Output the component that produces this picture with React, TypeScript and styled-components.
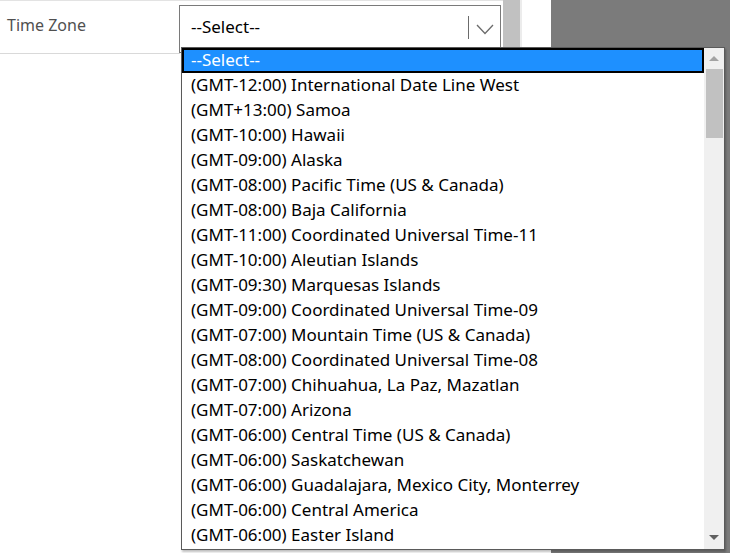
import React from "react";
import styled, { createGlobalStyle } from "styled-components";

const GlobalStyle = createGlobalStyle`
  html, body { margin: 0; padding: 0; width: 730px; height: 553px; overflow: hidden; }
  body { font-family: "Noto Sans", "Open Sans", sans-serif; background: #ffffff; }
`;

const zones = [
  "(GMT-12:00) International Date Line West",
  "(GMT+13:00) Samoa",
  "(GMT-10:00) Hawaii",
  "(GMT-09:00) Alaska",
  "(GMT-08:00) Pacific Time (US & Canada)",
  "(GMT-08:00) Baja California",
  "(GMT-11:00) Coordinated Universal Time-11",
  "(GMT-10:00) Aleutian Islands",
  "(GMT-09:30) Marquesas Islands",
  "(GMT-09:00) Coordinated Universal Time-09",
  "(GMT-07:00) Mountain Time (US & Canada)",
  "(GMT-08:00) Coordinated Universal Time-08",
  "(GMT-07:00) Chihuahua, La Paz, Mazatlan",
  "(GMT-07:00) Arizona",
  "(GMT-06:00) Central Time (US & Canada)",
  "(GMT-06:00) Saskatchewan",
  "(GMT-06:00) Guadalajara, Mexico City, Monterrey",
  "(GMT-06:00) Central America",
  "(GMT-06:00) Easter Island",
];

const Page = styled.div`
  position: relative;
  display: flex;
  width: 730px;
  height: 553px;
`;

const FormPanel = styled.div`
  width: 503px;
  border-top: 1px solid #e3e3e3;
  box-sizing: border-box;
`;

const FieldRow = styled.div`
  display: flex;
  align-items: flex-start;
  height: 52px;
  border-bottom: 1px solid #d9d9d9;
  width: 180px;
  box-sizing: content-box;
  overflow: visible;
`;

const Label = styled.div`
  padding: 13px 0 0 7px;
  width: 172px;
  font-size: 16px;
  color: #505050;
  flex-shrink: 0;
`;

const SelectBox = styled.div`
  margin-top: 4px;
  flex-shrink: 0;
  width: 322px;
  height: 48px;
  box-sizing: border-box;
  border: 1px solid #7a7a7a;
  display: flex;
  align-items: flex-start;
  padding-top: 9px;
  background: #fff;
`;

const SelectText = styled.div`
  flex: 1;
  padding-left: 11px;
  font-size: 17px;
  line-height: 24px;
  color: #000;
`;

const Divider = styled.div`
  width: 1px;
  height: 23px;
  margin-top: 1px;
  background: #6b6b6b;
`;

const Chevron = styled.svg`
  width: 18px;
  height: 11px;
  margin: 9px 6px 0 7px;
`;

const PageScrollbar = styled.div`
  width: 17px;
  background: #c1c1c1;
  height: 47px;
`;

const WhiteStrip = styled.div`
  width: 29px;
  height: 47px;
  background: #fff;
  border-left: 2px solid #ececec;
`;

const Backdrop = styled.div`
  flex: 1;
  background: #7b7b7b;
`;

const Dropdown = styled.div`
  position: absolute;
  left: 181px;
  top: 47px;
  width: 544px;
  height: 503px;
  box-sizing: border-box;
  border: 1px solid #5a5a5a;
  background: #fff;
  display: flex;
  box-shadow: 1px 2px 2px rgba(0, 0, 0, 0.25);
`;

const List = styled.div`
  flex: 1;
  overflow: hidden;
`;

const Option = styled.div<{ $selected?: boolean }>`
  height: 25px;
  box-sizing: border-box;
  padding-left: ${(p) => (p.$selected ? "7px" : "9px")};
  line-height: ${(p) => (p.$selected ? "20px" : "24px")};
  font-size: 17px;
  white-space: nowrap;
  color: ${(p) => (p.$selected ? "#ffffff" : "#000000")};
  background: ${(p) => (p.$selected ? "#1e90ff" : "transparent")};
  border: ${(p) => (p.$selected ? "2px solid #000" : "none")};
`;

const ScrollTrack = styled.div`
  width: 20px;
  background: #f0f0f0;
  display: flex;
  flex-direction: column;
  align-items: center;
`;

const Arrow = styled.div<{ $down?: boolean }>`
  width: 0;
  height: 0;
  border-left: 5px solid transparent;
  border-right: 5px solid transparent;
  ${(p) =>
    p.$down
      ? "border-top: 5px solid #606060; margin-top: auto; margin-bottom: 9px;"
      : "border-bottom: 5px solid #a3a3a3; margin-top: 8px;"}
`;

const Thumb = styled.div`
  width: 17px;
  height: 69px;
  margin-top: 8px;
  background: #c1c1c1;
`;

export default function App() {
  return (
    <>
      <GlobalStyle />
      <Page>
        <FormPanel>
          <FieldRow>
            <Label>Time Zone</Label>
            <SelectBox>
              <SelectText>--Select--</SelectText>
              <Divider />
              <Chevron viewBox="0 0 18 11">
                <polyline points="1,1 9,9.5 17,1" fill="none" stroke="#6b6b6b" strokeWidth="1.3" />
              </Chevron>
            </SelectBox>
          </FieldRow>
        </FormPanel>
        <PageScrollbar />
        <WhiteStrip />
        <Backdrop />
        <Dropdown>
          <List>
            <Option $selected>--Select--</Option>
            {zones.map((z) => (
              <Option key={z}>{z}</Option>
            ))}
          </List>
          <ScrollTrack>
            <Arrow />
            <Thumb />
            <Arrow $down />
          </ScrollTrack>
        </Dropdown>
      </Page>
    </>
  );
}
